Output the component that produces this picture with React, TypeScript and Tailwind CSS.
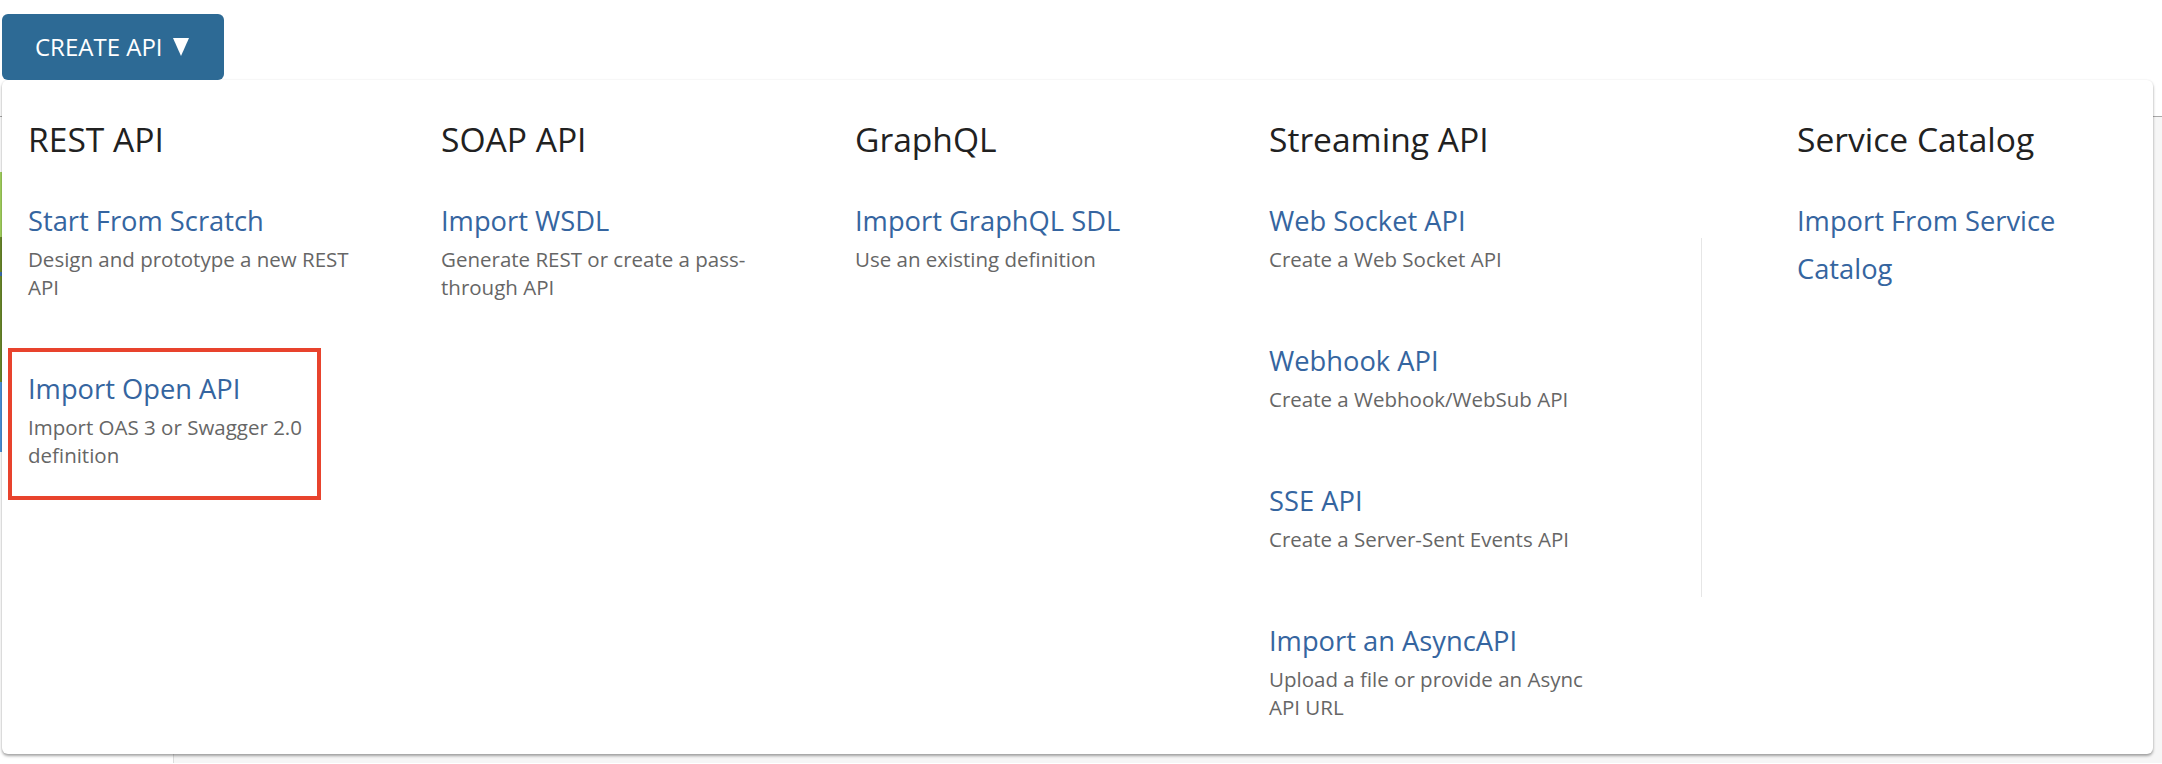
import React from 'react';

type Item = {
  title: string;
  desc?: string;
  marked?: boolean;
};

type Column = {
  heading: string;
  width: string;
  items: Item[];
};

const columns: Column[] = [
  {
    heading: 'REST API',
    width: 'w-[413px]',
    items: [
      { title: 'Start From Scratch', desc: 'Design and prototype a new REST API' },
      { title: 'Import Open API', desc: 'Import OAS 3 or Swagger 2.0 definition', marked: true },
    ],
  },
  {
    heading: 'SOAP API',
    width: 'w-[414px]',
    items: [{ title: 'Import WSDL', desc: 'Generate REST or create a pass-through API' }],
  },
  {
    heading: 'GraphQL',
    width: 'w-[414px]',
    items: [{ title: 'Import GraphQL SDL', desc: 'Use an existing definition' }],
  },
  {
    heading: 'Streaming API',
    width: 'w-[432px]',
    items: [
      { title: 'Web Socket API', desc: 'Create a Web Socket API' },
      { title: 'Webhook API', desc: 'Create a Webhook/WebSub API' },
      { title: 'SSE API', desc: 'Create a Server-Sent Events API' },
      { title: 'Import an AsyncAPI', desc: 'Upload a file or provide an Async API URL' },
    ],
  },
];

const MenuItem: React.FC<{ item: Item }> = ({ item }) => (
  <div className="relative">
    {item.marked && (
      <span className="pointer-events-none absolute -left-[20px] -top-[17px] h-[152px] w-[313px] border-4 border-[#e8432d]" />
    )}
    <a href="#" className="block text-[27.3px] leading-[48px] text-[#3565a0]">
      {item.title}
    </a>
    {item.desc && (
      <p className="max-w-[336px] text-[20.5px] leading-[28px] text-[#666666]">{item.desc}</p>
    )}
  </div>
);

const MenuColumn: React.FC<{ column: Column }> = ({ column }) => (
  <div className={`${column.width} shrink-0`}>
    <h3 className="mb-[38px] text-[33.6px] leading-[40px] text-[#212121]">{column.heading}</h3>
    <div className="flex flex-col gap-[64px]">
      {column.items.map((item) => (
        <MenuItem key={item.title} item={item} />
      ))}
    </div>
  </div>
);

export default function App() {
  return (
    <div
      className="relative h-[764px] w-[2162px] overflow-hidden bg-white"
      style={{ fontFamily: '"Open Sans", "Noto Sans", sans-serif' }}
    >
      {/* page behind the menu */}
      <div className="h-[117px] border-b border-[#a8a8a8] bg-white" />
      <div className="flex h-[646px]">
        <div className="w-[174px] shrink-0 border-r border-[#dddddd] bg-white">
          <div className="mt-[55px] h-[65px] bg-[#a4d35e]" />
          <div className="h-[35px] bg-[#6b8a2a]" />
          <div className="h-[4px] bg-[#3d6fb0]" />
          <div className="h-[106px] bg-[#6b8a2a]" />
          <div className="h-[70px] bg-[#4a92dc]" />
        </div>
        <div className="flex-1 bg-[#f6f6f6]" />
      </div>

      {/* trigger */}
      <button className="absolute left-[2px] top-[14px] z-10 flex h-[66px] w-[222px] items-center rounded-[6px] bg-[#2d6a95] pl-[33px] text-[24px] text-white">
        CREATE API
        <svg className="ml-[10px]" width="16" height="18" viewBox="0 0 16 18">
          <path d="M0 0 H16 L8 18 Z" fill="#ffffff" />
        </svg>
      </button>

      {/* dropdown */}
      <div className="absolute left-[2px] top-[80px] flex h-[674px] w-[2151px] rounded-[6px] bg-white pl-[26px] pt-[39px] shadow-[0_2px_3px_rgba(0,0,0,0.35),0_0_2px_rgba(0,0,0,0.08)]">
        {columns.map((column) => (
          <MenuColumn key={column.heading} column={column} />
        ))}
        <div className="mt-[119px] h-[359px] w-px shrink-0 bg-[#e6e6e6]" />
        <div className="w-[400px] shrink-0 pl-[95px]">
          <h3 className="mb-[38px] whitespace-nowrap text-[33.6px] leading-[40px] text-[#212121]">Service Catalog</h3>
          <a href="#" className="block w-[300px] text-[27.3px] leading-[48px] text-[#3565a0]">
            Import From Service Catalog
          </a>
        </div>
      </div>
    </div>
  );
}
